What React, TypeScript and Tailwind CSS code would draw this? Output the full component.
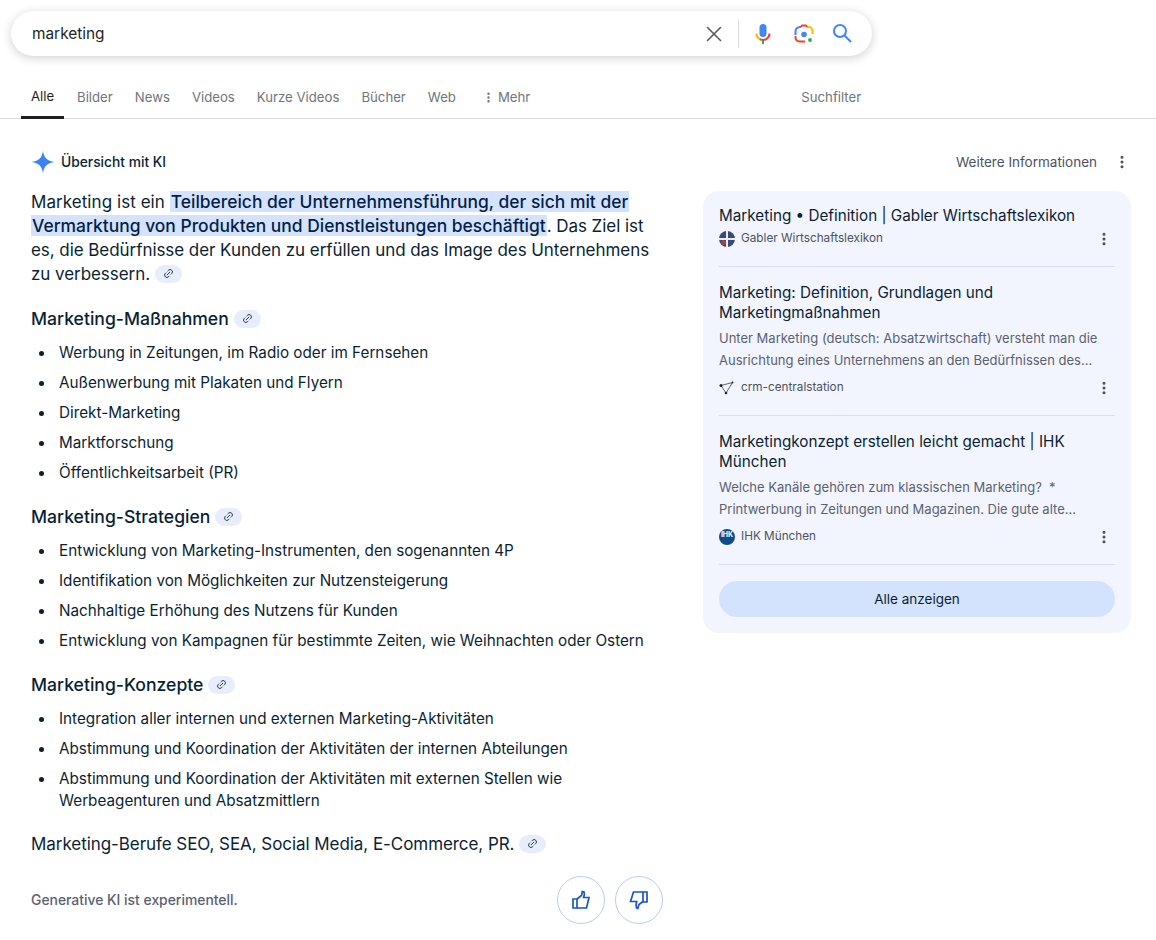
import { Link2, MoreVertical, X } from "lucide-react";

const tabs = ["Bilder", "News", "Videos", "Kurze Videos", "Bücher", "Web"];

const LinkChip = () => (
  <span className="inline-flex items-center justify-center w-[27px] h-[18px] rounded-full bg-[#e8edfb] ml-[5px] align-[1px]">
    <Link2 size={11} strokeWidth={2} className="text-[#1f2d4a] -rotate-45" />
  </span>
);

const Bullets = ({ items }: { items: string[] }) => (
  <ul className="text-[15.25px] leading-[22px] text-[#0b1f33] flex flex-col gap-[8px]">
    {items.map((item) => (
      <li key={item} className="flex items-start">
        <span className="w-[5px] h-[5px] rounded-full bg-[#0b1f33] shrink-0 mt-[9px] ml-[8px] mr-[15px]" />
        <span>{item}</span>
      </li>
    ))}
  </ul>
);

const Dots = () => <MoreVertical size={16} strokeWidth={2.5} className="text-[#4a4f57] shrink-0" />;

const Source = ({ icon, name }: { icon: React.ReactNode; name: string }) => (
  <div className="flex items-center h-[16px]">
    <span className="w-[16px] h-[16px] shrink-0 mr-[6px] flex items-center justify-center">{icon}</span>
    <span className="text-[11.75px] text-[#4d5260] flex-1">{name}</span>
    <span className="mr-[3px]">
      <Dots />
    </span>
  </div>
);

const ThumbUp = () => (
  <svg width="20" height="20" viewBox="0 0 20 20" fill="none" stroke="#1a56c4" strokeWidth="1.7" strokeLinejoin="miter">
    <path d="M2 9h4v9H2z" />
    <path d="M6 9l4.500-3.500.8-4 1.700.5.400 2.500-.8 3h5.400l-2.500 10.500H6" />
  </svg>
);

const ThumbDown = () => (
  <svg width="20" height="20" viewBox="0 0 20 20" fill="none" stroke="#1a56c4" strokeWidth="1.7" strokeLinejoin="miter">
    <path d="M18 2h-4v10h4z" />
    <path d="M14 2H4.500L1.500 11.500h6.200l-.7 3.500.6 3 1.200.5 1.200-4 4-3" />
  </svg>
);

export default function App() {
  return (
    <div className="w-[1156px] h-[940px] overflow-hidden bg-white font-['Inter',sans-serif] text-[#0b1f33]">
      {/* search bar */}
      <div className="pt-[11px] pl-[11px]">
        <div className="w-[861px] h-[45px] rounded-full bg-white shadow-[0_2px_8px_1px_rgba(64,60,67,0.2)] flex items-center pl-[21px] pr-[19px]">
          <span className="flex-1 text-[15.4px] text-[#1f1f1f] pt-[1px]">marketing</span>
          <X size={26} strokeWidth={1.5} className="text-[#5a5a5a]" />
          <span className="w-px h-[28px] bg-[#dadce0] ml-[11px] mr-[12px]" />
          <svg width="24" height="24" viewBox="0 0 24 24" className="mr-[17px]">
            <rect x="8.500" y="2" width="7" height="13" rx="3.500" fill="#4285f4" />
            <path d="M5.500 11.500a6.500 6.500 0 0 0 3.200 5.600" fill="none" stroke="#fbbc04" strokeWidth="2" />
            <path d="M8.700 17.100a6.500 6.500 0 0 0 6.600 0 6.500 6.500 0 0 0 3.200-5.600" fill="none" stroke="#ea4335" strokeWidth="2" />
            <rect x="11" y="18" width="2" height="4" fill="#34a853" />
          </svg>
          <svg width="24" height="24" viewBox="0 0 24 24" className="mr-[16px]">
            <path d="M3.500 13V9.500A4.500 4.500 0 0 1 8 5H9" fill="none" stroke="#4285f4" strokeWidth="2" />
            <path d="M3.500 14v1.500A4 4 0 0 0 7.500 19.500H13" fill="none" stroke="#ea4335" strokeWidth="2" />
            <path d="M15 5h1.500a4 4 0 0 1 4 4v3" fill="none" stroke="#fbbc04" strokeWidth="2" />
            <path d="M9 5l1-1.500h4L15 5" fill="none" stroke="#ea4335" strokeWidth="2" />
            <circle cx="12" cy="12.500" r="2.800" fill="#4285f4" />
            <circle cx="18" cy="18" r="1.900" fill="#34a853" />
          </svg>
          <svg width="21" height="21" viewBox="0 0 21 21" fill="none" stroke="#4285f4" strokeWidth="2">
            <circle cx="8" cy="8" r="6" />
            <path d="M12.500 12.500l6.500 6.500" />
          </svg>
        </div>
      </div>

      {/* tabs */}
      <div className="h-[63px] border-b border-[#dadce0] flex items-end pl-[21px] text-[13.2px] text-[#70757a]">
        <div className="h-[41px] w-[43px] flex items-center justify-center text-[#1f1f1f] border-b-[3px] border-[#1f1f1f] -mb-px">
          Alle
        </div>
        <div className="flex gap-[22px] ml-[13px]">
          {tabs.map((t) => (
            <div key={t} className="h-[41px] flex items-center">
              {t}
            </div>
          ))}
        </div>
        <div className="h-[41px] flex items-center ml-[26px]">
          <MoreVertical size={13} strokeWidth={2.500} className="mr-[3px]" />
          Mehr
        </div>
        <div className="h-[41px] flex items-center ml-[271px]">Suchfilter</div>
      </div>

      {/* results */}
      <div className="flex pl-[31px] pr-[25px]">
        <div className="w-[632px] shrink-0">
          <div className="flex items-center h-[26px] mt-[30px]">
            <svg width="24" height="24" viewBox="0 0 24 24" className="mr-[6px]">
              <path d="M12 0.500C12.700 7.500 16 11 23.500 12C16 13 12.700 16.500 12 23.500C11.300 16.500 8 13 0.500 12C8 11 11.300 7.500 12 0.500Z" fill="#3b82f6" />
            </svg>
            <span className="text-[13.800px] font-medium text-[#0b1f33]">Übersicht mit KI</span>
          </div>

          <p className="w-[632px] mt-[15px] text-[17px] leading-[24px] tracking-[-0.06px]">
            <span className="tracking-[0.06px]">Marketing ist ein </span>
            <span className="bg-[#d3e3fd] font-medium text-[#041e49] box-decoration-clone px-[1px] text-[17.450px] tracking-normal">
              Teilbereich der Unternehmensführung, der sich mit der Vermarktung von Produkten und Dienstleistungen beschäftigt
            </span>
            . Das Ziel ist es, die Bedürfnisse der Kunden zu erfüllen und das Image des Unternehmens zu verbessern.
            <LinkChip />
          </p>

          <h3 className="mt-[21px] mb-[11px] text-[17.600px] leading-[24px] font-medium">
            Marketing-Maßnahmen
            <LinkChip />
          </h3>
          <Bullets
            items={[
              "Werbung in Zeitungen, im Radio oder im Fernsehen",
              "Außenwerbung mit Plakaten und Flyern",
              "Direkt-Marketing",
              "Marktforschung",
              "Öffentlichkeitsarbeit (PR)",
            ]}
          />

          <h3 className="mt-[21px] mb-[11px] text-[17.600px] leading-[24px] font-medium">
            Marketing-Strategien
            <LinkChip />
          </h3>
          <Bullets
            items={[
              "Entwicklung von Marketing-Instrumenten, den sogenannten 4P",
              "Identifikation von Möglichkeiten zur Nutzensteigerung",
              "Nachhaltige Erhöhung des Nutzens für Kunden",
              "Entwicklung von Kampagnen für bestimmte Zeiten, wie Weihnachten oder Ostern",
            ]}
          />

          <h3 className="mt-[21px] mb-[11px] text-[17.600px] leading-[24px] font-medium">
            Marketing-Konzepte
            <LinkChip />
          </h3>
          <Bullets
            items={[
              "Integration aller internen und externen Marketing-Aktivitäten",
              "Abstimmung und Koordination der Aktivitäten der internen Abteilungen",
              "Abstimmung und Koordination der Aktivitäten mit externen Stellen wie Werbeagenturen und Absatzmittlern",
            ]}
          />

          <p className="mt-[20px] text-[17px] leading-[24px] tracking-[-0.06px]">
            Marketing-Berufe SEO, SEA, Social Media, E-Commerce, PR.
            <LinkChip />
          </p>

          <div className="flex items-center mt-[20px]">
            <span className="flex-1 text-[13.900px] font-medium text-[#5a6272]">Generative KI ist experimentell.</span>
            <button className="w-[48px] h-[48px] rounded-full border border-[#b9cdf3] flex items-center justify-center mr-[10px]">
              <ThumbUp />
            </button>
            <button className="w-[48px] h-[48px] rounded-full border border-[#b9cdf3] flex items-center justify-center">
              <ThumbDown />
            </button>
          </div>
        </div>

        <div className="ml-[40px] w-[428px] shrink-0">
          <div className="flex items-center justify-end h-[26px] mt-[30px] text-[13.500px] text-[#4d5260]">
            <span>Weitere Informationen</span>
            <span className="ml-[17px] mr-[1px]">
              <Dots />
            </span>
          </div>

          <div className="mt-[16px] rounded-[16px] bg-[#f2f5fe] px-[16px] pt-[15px] pb-[16px]">
            <div className="pb-[19px] border-b border-[#d5e0f7]">
              <h4 className="text-[15.250px] leading-[20px] mb-[5px] text-[#0b1f33]">Marketing • Definition | Gabler Wirtschaftslexikon</h4>
              <Source
                name="Gabler Wirtschaftslexikon"
                icon={
                  <svg width="16" height="16" viewBox="0 0 16 16">
                    <circle cx="8" cy="8" r="8" fill="#3a4a78" />
                    <path d="M7 0h2v16H7zM0 7h16v2H0z" fill="#e8ecf5" />
                    <circle cx="4.500" cy="11.500" r="2.500" fill="#b43a48" />
                  </svg>
                }
              />
            </div>

            <div className="pt-[16px] pb-[19px] border-b border-[#d5e0f7]">
              <h4 className="text-[15.250px] leading-[20px] mb-[4px] text-[#0b1f33]">Marketing: Definition, Grundlagen und Marketingmaßnahmen</h4>
              <p className="text-[13px] leading-[22px] text-[#5a6272] h-[44px] mb-[9px]">
                Unter Marketing (deutsch: Absatzwirtschaft) versteht man die
                <br />
                Ausrichtung eines Unternehmens an den Bedürfnissen des…
              </p>
              <Source
                name="crm-centralstation"
                icon={
                  <svg width="16" height="16" viewBox="0 0 16 16">
                    <path d="M2 5.500L7 13L13.500 2.500Z" fill="none" stroke="#3d4450" strokeWidth="0.800" />
                    <circle cx="2" cy="5.500" r="1.500" fill="#1f2530" />
                    <circle cx="7" cy="13" r="1.300" fill="#1f2530" />
                    <circle cx="13.500" cy="2.500" r="1" fill="#1f2530" />
                  </svg>
                }
              />
            </div>

            <div className="pt-[16px] pb-[19px] border-b border-[#d5e0f7]">
              <h4 className="text-[15.250px] leading-[20px] mb-[4px] text-[#0b1f33]">Marketingkonzept erstellen leicht gemacht | IHK München</h4>
              <p className="text-[13px] leading-[22px] text-[#5a6272] h-[44px] mb-[9px]">
                Welche Kanäle gehören zum klassischen Marketing? &nbsp;*
                <br />
                Printwerbung in Zeitungen und Magazinen. Die gute alte…
              </p>
              <Source
                name="IHK München"
                icon={
                  <span className="w-[16px] h-[16px] rounded-full bg-[#0f4c8a] text-white text-[7px] font-bold leading-[12px] text-center overflow-hidden">
                    IHK
                  </span>
                }
              />
            </div>

            <button className="mt-[16px] w-full h-[36px] rounded-full bg-[#d3e3fd] text-[13.500px] text-[#0b1f33]">
              Alle anzeigen
            </button>
          </div>
        </div>
      </div>
    </div>
  );
}
